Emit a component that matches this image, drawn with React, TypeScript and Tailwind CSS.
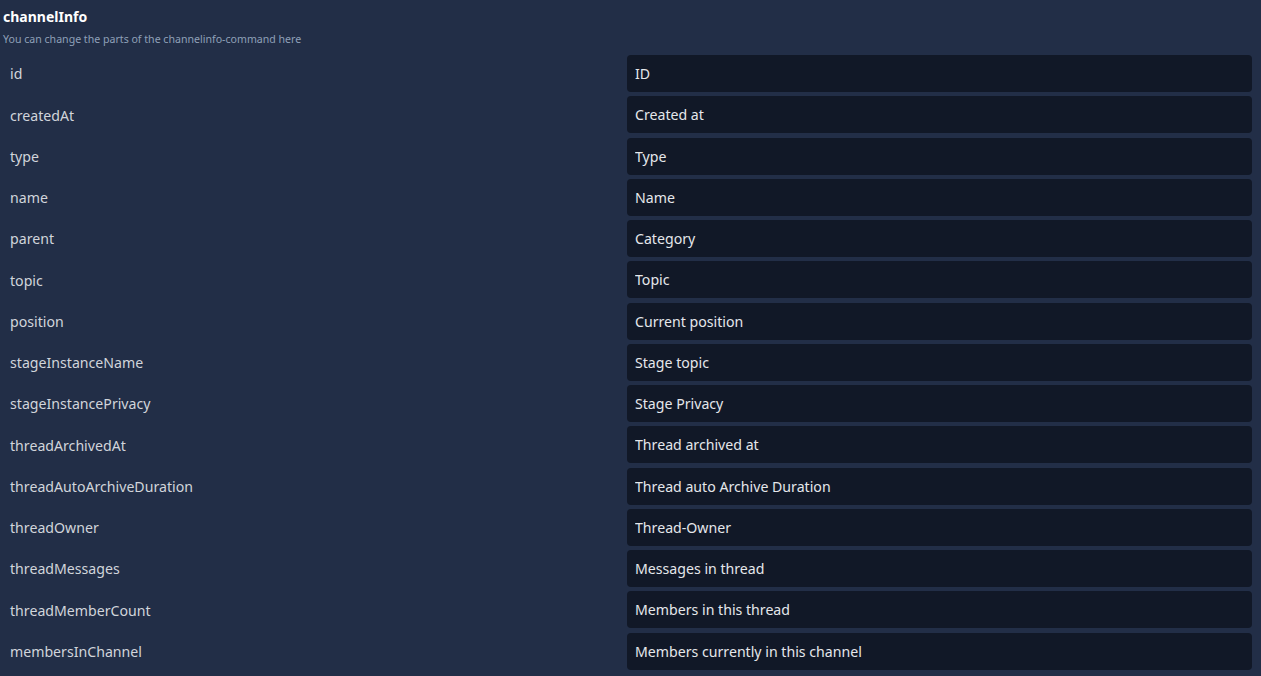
import React from 'react';

const FIELDS: { key: string; value: string }[] = [
  { key: 'id', value: 'ID' },
  { key: 'createdAt', value: 'Created at' },
  { key: 'type', value: 'Type' },
  { key: 'name', value: 'Name' },
  { key: 'parent', value: 'Category' },
  { key: 'topic', value: 'Topic' },
  { key: 'position', value: 'Current position' },
  { key: 'stageInstanceName', value: 'Stage topic' },
  { key: 'stageInstancePrivacy', value: 'Stage Privacy' },
  { key: 'threadArchivedAt', value: 'Thread archived at' },
  { key: 'threadAutoArchiveDuration', value: 'Thread auto Archive Duration' },
  { key: 'threadOwner', value: 'Thread-Owner' },
  { key: 'threadMessages', value: 'Messages in thread' },
  { key: 'threadMemberCount', value: 'Members in this thread' },
  { key: 'membersInChannel', value: 'Members currently in this channel' },
];

export default function App() {
  return (
    <div
      className="min-h-screen w-full bg-[#222e47] text-gray-100 overflow-hidden"
      style={{ fontFamily: '"Noto Sans", "Open Sans", sans-serif' }}
    >
      <div className="pl-[3px] pr-[9px] pt-[6px]">
        <h2 className="text-[14px] font-bold leading-[22px] text-white">channelInfo</h2>
        <p className="text-[10.6px] leading-[16px] mt-[3px] text-[#8fa0b8]">
          You can change the parts of the channelinfo-command here
        </p>

        <div className="mt-[8px] flex flex-col gap-[4.25px]">
          {FIELDS.map(({ key, value }) => (
            <div key={key} className="flex items-center">
              <label className="flex-1 pl-[7px] pt-[1px] text-[14.15px] text-[#d1d5db]">{key}</label>
              <input
                type="text"
                defaultValue={value}
                className="w-[625px] h-[37px] rounded-[4px] bg-[#111827] px-[8px] text-[14.15px] text-[#e5e7eb] outline-none"
                style={{ fontFamily: '"Noto Sans", "Open Sans", sans-serif' }}
              />
            </div>
          ))}
        </div>
      </div>
    </div>
  );
}
